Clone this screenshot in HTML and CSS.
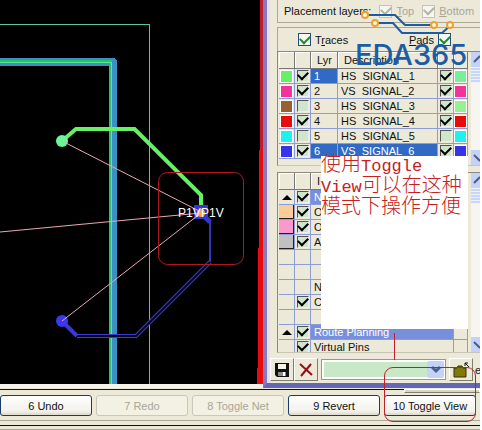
FILE: index.html
```html
<!DOCTYPE html>
<html lang="zh-CN">
<head>
<meta charset="utf-8">
<title>Layout editor</title>
<link rel="stylesheet" href="styles.css">
</head>
<body>
<div class="app">
  <main class="workspace">
    <section class="board">
      <svg class="canvas" viewBox="0 0 263 384" preserveAspectRatio="xMaxYMin slice" shape-rendering="crispEdges" aria-label="Board">
        <rect width="263" height="384" fill="#000"/>
        <path d="M0 24.500H149.500V384" fill="none" stroke="#5cc4a0"/>
        <path d="M0 62H113V384" fill="none" stroke="#3a8fc4" stroke-width="8" stroke-linejoin="round"/>
        <path d="M0 61H110.500V384" fill="none" stroke="#2fbc78" stroke-width="3"/>
        <path d="M0 62.500H111.500V384" fill="none" stroke="#52f088"/>
        <path d="M260 0h3v240h-3z" fill="#c01c30"/>
        <path d="M259 150h4v234h-6v-16h1v-120h1z" fill="#e60c10"/>
        <g shape-rendering="auto" fill="none">
          <path d="M62 141L76 129H134.500L201 195V208" stroke="#66f066" stroke-width="4"/>
          <circle cx="62" cy="141" r="6" fill="#68f898"/>
          <path d="M201 212L210 222V262" stroke="#3038b8" stroke-width="2"/>
          <path d="M201 213l9 9" stroke="#3434d0" stroke-width="5"/>
          <path d="M210 262L136 336H77" stroke="#3c3cc8" stroke-width="4"/>
          <path d="M210 262L136 336H77" stroke="#04042c" stroke-width="2"/>
          <path d="M77 336L62 321" stroke="#3838e0" stroke-width="4"/>
          <circle cx="62" cy="321" r="6" fill="#3838f0"/>
          <rect x="194" y="205" width="14" height="14" fill="#3434d8"/>
          <circle cx="201" cy="213" r="4" fill="#f0a030"/>
          <path d="M62 141L201 212M0 232L201 213L62 321" stroke="#e8a8b0"/>
          <rect x="158.500" y="172.500" width="85" height="92" rx="9" stroke="#b01820"/>
        </g>
        <g class="net-label"><text x="178" y="217">P1V</text><text x="201" y="217">P1V</text></g>
      </svg>
      <div class="board-edge"></div>
    </section>

    <aside class="panel">
      <div class="group placement">
        <span>Placement layers:</span>
        <label><input class="tick" type="checkbox" checked disabled><span><u>T</u>op</span></label>
        <label><input class="tick" type="checkbox" checked disabled><span><u>B</u>ottom</span></label>
      </div>
      <div class="group visibility">
        <label><input class="tick" type="checkbox" checked><span>T<u>r</u>aces</span></label>
        <label><span><u>P</u>ads</span><input class="tick" type="checkbox" checked></label>
      </div>

      <div class="list layers">
        <table>
          <colgroup><col class="c-box"><col class="c-box"><col class="c-lyr"><col><col class="c-box"><col class="c-end"></colgroup>
          <thead><tr><th></th><th></th><th>Lyr</th><th>Description</th><th></th><th></th></tr></thead>
          <tbody>
            <tr><td><i class="swatch green"></i></td><td><input type="checkbox" checked aria-label="Traces 1"></td><td class="picked">1</td><td>HS&nbsp; SIGNAL_1</td><td><input type="checkbox" checked aria-label="Pads 1"></td><td><i class="swatch mint"></i></td></tr>
            <tr><td><i class="swatch pink"></i></td><td><input type="checkbox" checked aria-label="Traces 2"></td><td>2</td><td>VS&nbsp; SIGNAL_2</td><td><input type="checkbox" checked aria-label="Pads 2"></td><td><i class="swatch pink"></i></td></tr>
            <tr><td><i class="swatch brown"></i></td><td><input type="checkbox" aria-label="Traces 3"></td><td>3</td><td>HS&nbsp; SIGNAL_3</td><td><input type="checkbox" checked aria-label="Pads 3"></td><td><i class="swatch lime"></i></td></tr>
            <tr><td><i class="swatch red"></i></td><td><input type="checkbox" checked aria-label="Traces 4"></td><td>4</td><td>HS&nbsp; SIGNAL_4</td><td><input type="checkbox" checked aria-label="Pads 4"></td><td><i class="swatch red"></i></td></tr>
            <tr><td><i class="swatch cyan"></i></td><td><input type="checkbox" aria-label="Traces 5"></td><td>5</td><td>HS&nbsp; SIGNAL_5</td><td><input type="checkbox" aria-label="Pads 5"></td><td><i class="swatch cyan"></i></td></tr>
            <tr><td><i class="swatch blue"></i></td><td><input type="checkbox" checked aria-label="Traces 6"></td><td class="picked">6</td><td class="picked">VS&nbsp; SIGNAL_6</td><td><input type="checkbox" checked aria-label="Pads 6"></td><td><i class="swatch blue"></i></td></tr>
          </tbody>
        </table>
        <div class="scroll">
          <svg class="arrow" viewBox="0 0 9 15"><path d="M3 10l6-6" /></svg>
          <div class="thumb"></div>
          <svg class="arrow last" viewBox="0 0 9 15"><path d="M3 5l6 6" /></svg>
        </div>
      </div>

      <div class="list objects">
        <table>
          <colgroup><col class="c-box"><col class="c-box"><col><col class="c-end"></colgroup>
          <thead><tr><th></th><th></th><th>I</th><th></th></tr></thead>
          <tbody>
            <tr><td><i class="fold"></i></td><td><input type="checkbox" checked aria-label="N"></td><td class="section">N</td><td></td></tr>
            <tr><td><i class="chip peach"></i></td><td><input type="checkbox" checked aria-label="O"></td><td>O</td><td></td></tr>
            <tr><td><i class="chip rose"></i></td><td><input type="checkbox" checked aria-label="O"></td><td>O</td><td></td></tr>
            <tr><td><i class="chip grey"></i></td><td><input type="checkbox" checked aria-label="A"></td><td>A</td><td></td></tr>
            <tr><td></td><td></td><td></td><td></td></tr>
            <tr><td></td><td></td><td></td><td></td></tr>
            <tr><td></td><td></td><td>N</td><td></td></tr>
            <tr><td></td><td><input type="checkbox" checked aria-label="C"></td><td>C</td><td></td></tr>
            <tr><td></td><td></td><td></td><td></td></tr>
            <tr><td><i class="fold"></i></td><td><input type="checkbox" checked aria-label="Route Planning"></td><td class="section">Route Planning</td><td></td></tr>
            <tr><td></td><td><input type="checkbox" checked aria-label="Virtual Pins"></td><td>Virtual Pins</td><td></td></tr>
          </tbody>
        </table>
        <div class="scroll">
          <svg class="arrow" viewBox="0 0 9 15"><path d="M3 10l6-6" /></svg>
          <div class="thumb"></div>
          <svg class="arrow last" viewBox="0 0 9 15"><path d="M3 5l6 6" /></svg>
        </div>
      </div>

      <div class="tools">
        <button class="tool" aria-label="Save"><svg width="16" height="16" viewBox="0 0 16 16"><path d="M1 1h14v14H3l-2-2z" fill="#111"/><path d="M4 2h8v5H4z" fill="#f4f2e4"/><path d="M4 10h8v4H4z" fill="#8c8c80"/><path d="M9 10h2v4H9z" fill="#fff"/></svg></button>
        <button class="tool" aria-label="Delete"><svg width="16" height="16" viewBox="0 0 16 16"><path d="M2 2l12 11M13 2L3 14" stroke="#901018" stroke-width="2" fill="none"/></svg></button>
        <div class="combo">
          <select aria-label="View"><option></option></select>
          <svg class="drop" viewBox="0 0 17 17"><path d="M5 6l4 4 4-4" fill="none" stroke="#4c6088" stroke-width="3"/></svg>
        </div>
        <button class="tool" aria-label="Open"><svg width="18" height="16" viewBox="0 0 18 16"><path d="M2 6h3l1-2h4l1 2h3v9H2z" fill="#807808" stroke="#333008"/><path d="M17 5l-4-4m0 3V1h3" stroke="#111" fill="none"/></svg></button>
        <span class="tool-cut">e</span>
      </div>

      <svg class="logo" viewBox="0 0 112 60" aria-label="EDA365">
        <g fill="none" stroke="#1c5ca4" stroke-width="2"><path d="M12 5H39L49 15H75"/><path d="M22 13H37L46 23H86L95 15"/></g>
        <g fill="#fff4dc" stroke="#f0a030" stroke-width="2"><circle cx="9" cy="5" r="3"/><circle cx="19" cy="13" r="3"/><circle cx="78" cy="15" r="3"/><circle cx="94" cy="15" r="3"/></g>
        <text x="-1" y="55">EDA365</text>
      </svg>

      <div class="note">使用<span>Toggle</span><br><span>View</span>可以在这种<br>模式下操作方便</div>
    </aside>
  </main>

  <footer class="keys">
    <div class="grip"></div>
    <button>6 Undo</button>
    <button disabled>7 Redo</button>
    <button disabled>8 Toggle Net</button>
    <button>9 Revert</button>
    <button class="marked">10 Toggle View</button>
  </footer>
  <div class="status"></div>
</div>
</body>
</html>
```
FILE: styles.css
```css
* { box-sizing: border-box; }

body {
  margin: 0;
  background: #fff;
  font: 11px/14px "Liberation Sans", sans-serif;
  color: #111;
}

.app { margin-right: 2px; background: #ece9d8; }

.workspace { display: flex; }

.board { flex: 1; min-width: 0; display: flex; flex-direction: column; background: #000; }
.canvas { display: block; width: 100%; height: 384px; }
.net-label { fill: #fff; font-size: 12px; }
.board-edge { flex: 1; background: #f4f2ea; }

.panel {
  position: relative;
  width: 217px;
  padding: 0 0 1px 10px;
  border-left: 4px solid #8878bc;
  border-bottom: 5px solid #6468b4;
  background: linear-gradient(90deg, #e4e2f0 3px, #ece9d8 3px);
}

.group { display: flex; align-items: center; border: 1px solid #aca899; border-right: 0; }
.group label { display: flex; align-items: center; gap: 4px; }
.placement { height: 23px; border-top: 0; padding-left: 6px; gap: 8px; margin-bottom: 4px; }
.placement label { color: #a8a698; }
.visibility { height: 24px; border-bottom: 0; padding: 0 29px 0 20px; justify-content: space-between; }

input[type="checkbox"] {
  appearance: none;
  display: grid;
  place-items: center;
  width: 12px;
  height: 12px;
  margin: 1px auto;
  background: #cfe6cc;
  border: 1px solid #555;
  border-right-color: #eee;
  border-bottom-color: #eee;
}
input[type="checkbox"]:checked::after {
  content: "";
  width: 8px;
  height: 5px;
  margin-bottom: 3px;
  border: solid #000;
  border-width: 0 0 2px 2px;
  transform: rotate(-45deg);
}
input[type="checkbox"].tick { width: 13px; height: 13px; margin: 0; border: 1px solid #1c5180; background: #f4f8f0; }
input[type="checkbox"].tick:checked::after { border-color: #218a21; }
input[type="checkbox"].tick:disabled { border-color: #c4c2b4; }
input[type="checkbox"].tick:disabled:checked::after { border-color: #b4b2a4; }

.list {
  display: flex;
  gap: 3px;
  overflow: hidden;
  border: 1px solid #8c8a7c;
  border-right: 0;
  border-bottom-color: #c8c5b4;
  padding-left: 1px;
}
.layers { height: 115px; margin-bottom: 6px; }
.objects { height: 181px; margin-bottom: 4px; }

table { flex: 1; width: 188px; height: max-content; table-layout: fixed; border-collapse: separate; border-spacing: 0; }
.c-box { width: 16px; }
.c-lyr { width: 27px; }
.c-end { width: 14px; }
th { height: 17px; padding: 0 0 0 6px; font-weight: normal; text-align: left; border: solid #777; border-width: 0 1px 1px 0; box-shadow: inset 1px 1px #fff; white-space: nowrap; overflow: hidden; }
td { height: 15px; padding: 0 0 0 3px; line-height: 14px; border: solid #8c9cd4; border-width: 0 1px 1px 0; white-space: nowrap; }
td:has(input), td:has(i) { padding: 0; }
.picked { background: #316ac5; color: #fff; }
.section { background: #7890dc; color: #fff; }

.swatch { display: block; width: 11px; height: 11px; margin: 0 auto; outline: 1px solid #fff; }
.chip { display: block; height: 14px; border: solid #222; border-width: 0 1px 1px 0; }
.green { background: #66f066; }
.mint { background: #78f098; }
.pink { background: #f0349c; }
.brown { background: #986030; }
.lime { background: #98f090; }
.red { background: #e60c0c; }
.cyan { background: #20f0f0; }
.blue { background: #3434e8; }
.peach { background: #fccc98; }
.rose { background: #fc98cc; }
.grey { background: #c0c0c0; }
.fold { display: block; width: 0; margin: 0 auto; border: 5px solid transparent; border-top: 0; border-bottom: 5px solid #000; }

.scroll { width: 9px; display: flex; flex-direction: column; background: #f6f5f0; }
.arrow { height: 15px; background: #c4d2fa; }
.arrow path { fill: none; stroke: #4c5c88; stroke-width: 2; }
.thumb { height: 15px; margin-top: 1px; background: repeating-linear-gradient(#c8d6fc 0 2px, #eef2ff 2px 3px); }
.last { margin-top: auto; }

.tools { display: flex; align-items: center; margin-left: -7px; height: 25px; }
.tool { display: grid; place-items: center; width: 24px; height: 23px; padding: 0; background: #ece9d8; border: 1px solid #fff; border-right-color: #807e70; border-bottom-color: #807e70; }
.combo { position: relative; flex: 1; height: 21px; margin: 0 3px; }
.combo select { appearance: none; display: block; width: 100%; height: 100%; border: 1px solid #7f9db9; background: #c8e8c8; box-shadow: inset 0 0 0 2px #fff; border-radius: 0; }
.drop { position: absolute; top: 2px; right: 2px; width: 17px; height: 17px; background: #c4d2fa; border-radius: 2px; }
.tool-cut { width: 7px; padding-left: 2px; overflow: hidden; }

.logo { position: absolute; top: 10px; left: 89px; width: 112px; height: 60px; overflow: visible; }
.logo text { font: 500 29px Inter, sans-serif; fill: #1c5ca4; }

.note {
  position: absolute;
  top: 156px;
  right: 12px;
  width: 147px;
  height: 173px;
  background: #fff;
  color: #c82020;
  font: 300 20px/20px "Liberation Mono", "Noto Sans CJK SC", monospace;
  white-space: nowrap;
}
.note span { font-size: 17px; }
.note::after { content: ""; position: absolute; left: 73px; top: 177px; height: 27px; border-left: 1px solid #c02028; }

.keys {
  position: relative;
  display: flex;
  gap: 4px;
  margin-top: 1px;
  padding: 5px 4px 4px 0;
  border-top: 1px solid #111;
  border-bottom: 1px solid #aca899;
}
.keys button {
  position: relative;
  flex: 1;
  height: 21px;
  padding: 0;
  border: 1px solid #1c3c68;
  border-radius: 3px;
  background: linear-gradient(#fff, #f2f1ea 80%, #dcd8cc);
  font: 11px/14px "Liberation Sans", sans-serif;
  color: #111;
  white-space: nowrap;
}
.keys button:disabled { border-color: #cac8bb; background: #f2f1e4; color: #a8a698; }
.keys .marked::after { content: ""; position: absolute; inset: -29px -1px -7px; border: 1px solid #c02028; border-radius: 9px; }
.grip { position: absolute; top: -1px; right: 0; width: 76px; height: 4px; background: #d8d5c6; border: 1px solid #fff; border-bottom-color: #807e70; }

.status { height: 10px; margin-top: 4px; border-top: 1px solid #111; background: linear-gradient(#ece9d8 3px, #aca899 3px 4px, #ece9d8 4px); }
```
